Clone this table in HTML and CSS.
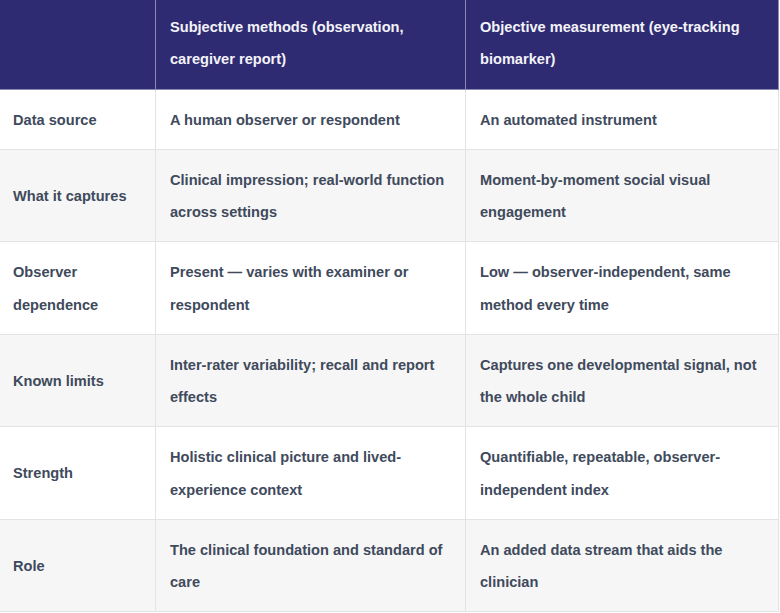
FILE: index.html
```html
<!DOCTYPE html>
<html lang="en">
<head>
<meta charset="utf-8">
<title>Subjective vs objective measurement</title>
<link rel="stylesheet" href="styles.css">
</head>
<body>
<div class="table">
  <div class="cell head first"></div>
  <div class="cell head">Subjective methods (observation, caregiver report)</div>
  <div class="cell head last">Objective measurement (eye-tracking biomarker)</div>

  <div class="cell first">Data source</div>
  <div class="cell">A human observer or respondent</div>
  <div class="cell last">An automated instrument</div>

  <div class="cell alt first">What it captures</div>
  <div class="cell alt">Clinical impression; real-world function across settings</div>
  <div class="cell alt last">Moment-by-moment social visual engagement</div>

  <div class="cell first">Observer dependence</div>
  <div class="cell">Present — varies with examiner or respondent</div>
  <div class="cell last">Low — observer-independent, same method every time</div>

  <div class="cell alt first">Known limits</div>
  <div class="cell alt">Inter-rater variability; recall and report effects</div>
  <div class="cell alt last">Captures one developmental signal, not the whole child</div>

  <div class="cell first">Strength</div>
  <div class="cell">Holistic clinical picture and lived-experience context</div>
  <div class="cell last">Quantifiable, repeatable, observer-independent index</div>

  <div class="cell alt first">Role</div>
  <div class="cell alt">The clinical foundation and standard of care</div>
  <div class="cell alt last">An added data stream that aids the clinician</div>
</div>
</body>
</html>
```

FILE: styles.css
```css
html, body {
  margin: 0;
  padding: 0;
  background: #ffffff;
}

.table {
  display: grid;
  grid-template-columns: 155px 310px 314px;
  width: 779px;
  font-family: "Liberation Sans", Arial, sans-serif;
  font-size: 14.6px;
  font-weight: 700;
  line-height: 32.5px;
  color: #404a5c;
}

.cell {
  display: flex;
  align-items: center;
  padding: 14px 14px 12.5px 14px;
  border-bottom: 1px solid #e3e3e3;
  border-left: 1px solid #e3e3e3;
  background: #ffffff;
}

.cell.first {
  border-left: none;
  padding-left: 13px;
}

.cell.last {
  border-right: 1px solid #e3e3e3;
}

.cell.alt {
  background: #f6f6f6;
}

.cell.head {
  background: #2f2b72;
  color: #f3f3f8;
  padding-top: 10.5px;
  padding-bottom: 13px;
  border-bottom-color: #8c8ab3;
  border-left-color: #8c8ab3;
  align-items: flex-start;
}

.cell.head.first {
  border-left: none;
}

.cell.head.last {
  border-right-color: #8c8ab3;
}
```
